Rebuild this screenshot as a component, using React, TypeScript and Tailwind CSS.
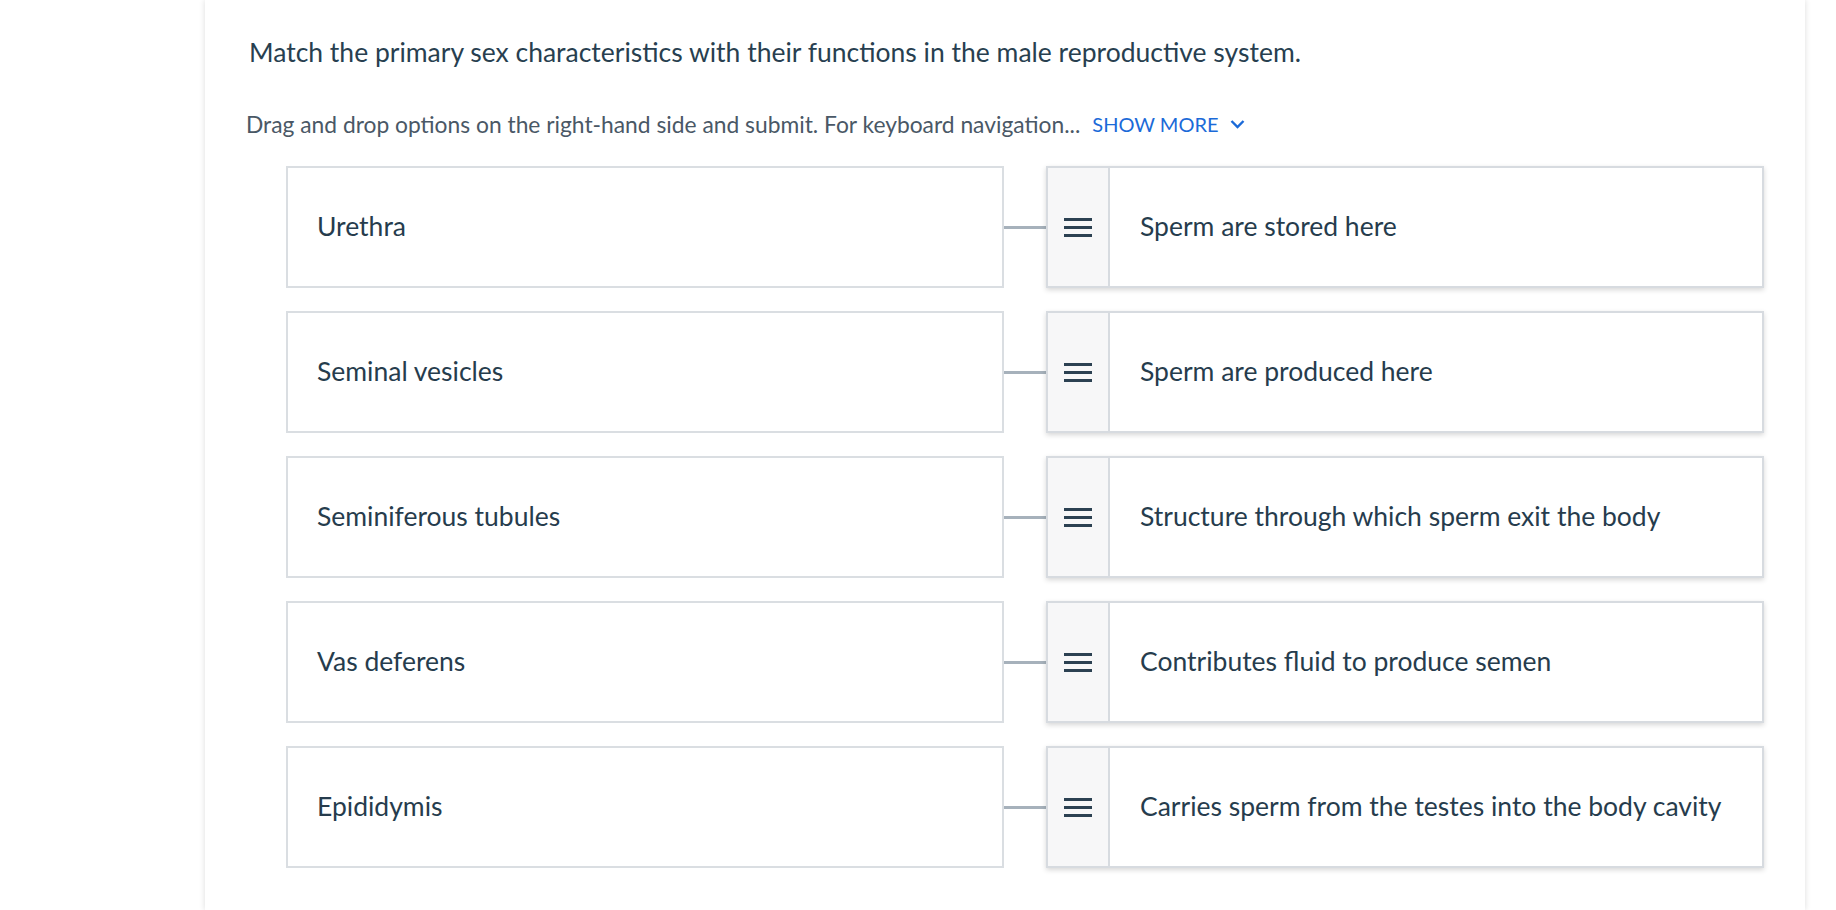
import React from "react";

const pairs = [
  { left: "Urethra", right: "Sperm are stored here" },
  { left: "Seminal vesicles", right: "Sperm are produced here" },
  { left: "Seminiferous tubules", right: "Structure through which sperm exit the body" },
  { left: "Vas deferens", right: "Contributes fluid to produce semen" },
  { left: "Epididymis", right: "Carries sperm from the testes into the body cavity" },
];

const Handle = () => (
  <svg width="28" height="19" viewBox="0 0 28 19" fill="#2c4152">
    <rect x="0" y="0" width="28" height="3" />
    <rect x="0" y="8" width="28" height="3" />
    <rect x="0" y="16" width="28" height="3" />
  </svg>
);

const App = () => {
  return (
    <div className="min-h-screen w-full bg-white flex overflow-hidden" style={{ fontFamily: "Lato, 'Open Sans', sans-serif" }}>
      <div className="w-[205px] shrink-0" />
      <div className="w-[1600px] shrink-0 min-h-[910px] bg-white shadow-[0_0_6px_rgba(0,0,0,0.14)] pl-[41px] pt-[38px]">
        <h1 className="text-[26.5px] leading-[28px] text-[#283f50] ml-[3px]">
          Match the primary sex characteristics with their functions in the male reproductive system.
        </h1>
        <div className="mt-[46px] flex items-center text-[22.8px] leading-[24px]">
          <span className="text-[#4a5866]">
            Drag and drop options on the right-hand side and submit. For keyboard navigation...
          </span>
          <button className="ml-[12px] flex items-center gap-[12px] text-[20px] text-[#1b6ad8] uppercase">
            Show more
            <svg width="15" height="10" viewBox="0 0 15 10" fill="none" stroke="#1b6ad8" strokeWidth="2.4">
              <path d="M1.5 2 L7.5 8 L13.5 2" />
            </svg>
          </button>
        </div>
        <div className="mt-[30px] ml-[40px] flex flex-col gap-[23px]">
          {pairs.map((p) => (
            <div key={p.left} className="flex items-center">
              <div className="w-[718px] h-[122px] border-2 border-[#dadee2] flex items-center pl-[29px] text-[26.5px] text-[#263c4d]">
                {p.left}
              </div>
              <div className="w-[42px] h-[3px] bg-[#a6b1bb]" />
              <div className="w-[718px] h-[122px] border-2 border-[#d7dbe0] flex shadow-[0_2px_5px_rgba(0,0,0,0.16)] bg-white">
                <div className="w-[62px] bg-[#f7f7f8] border-r-2 border-[#d7dbe0] flex items-center justify-center">
                  <Handle />
                </div>
                <div className="flex items-center pl-[30px] text-[26.5px] text-[#263c4d]">{p.right}</div>
              </div>
            </div>
          ))}
        </div>
      </div>
    </div>
  );
};

export default App;
